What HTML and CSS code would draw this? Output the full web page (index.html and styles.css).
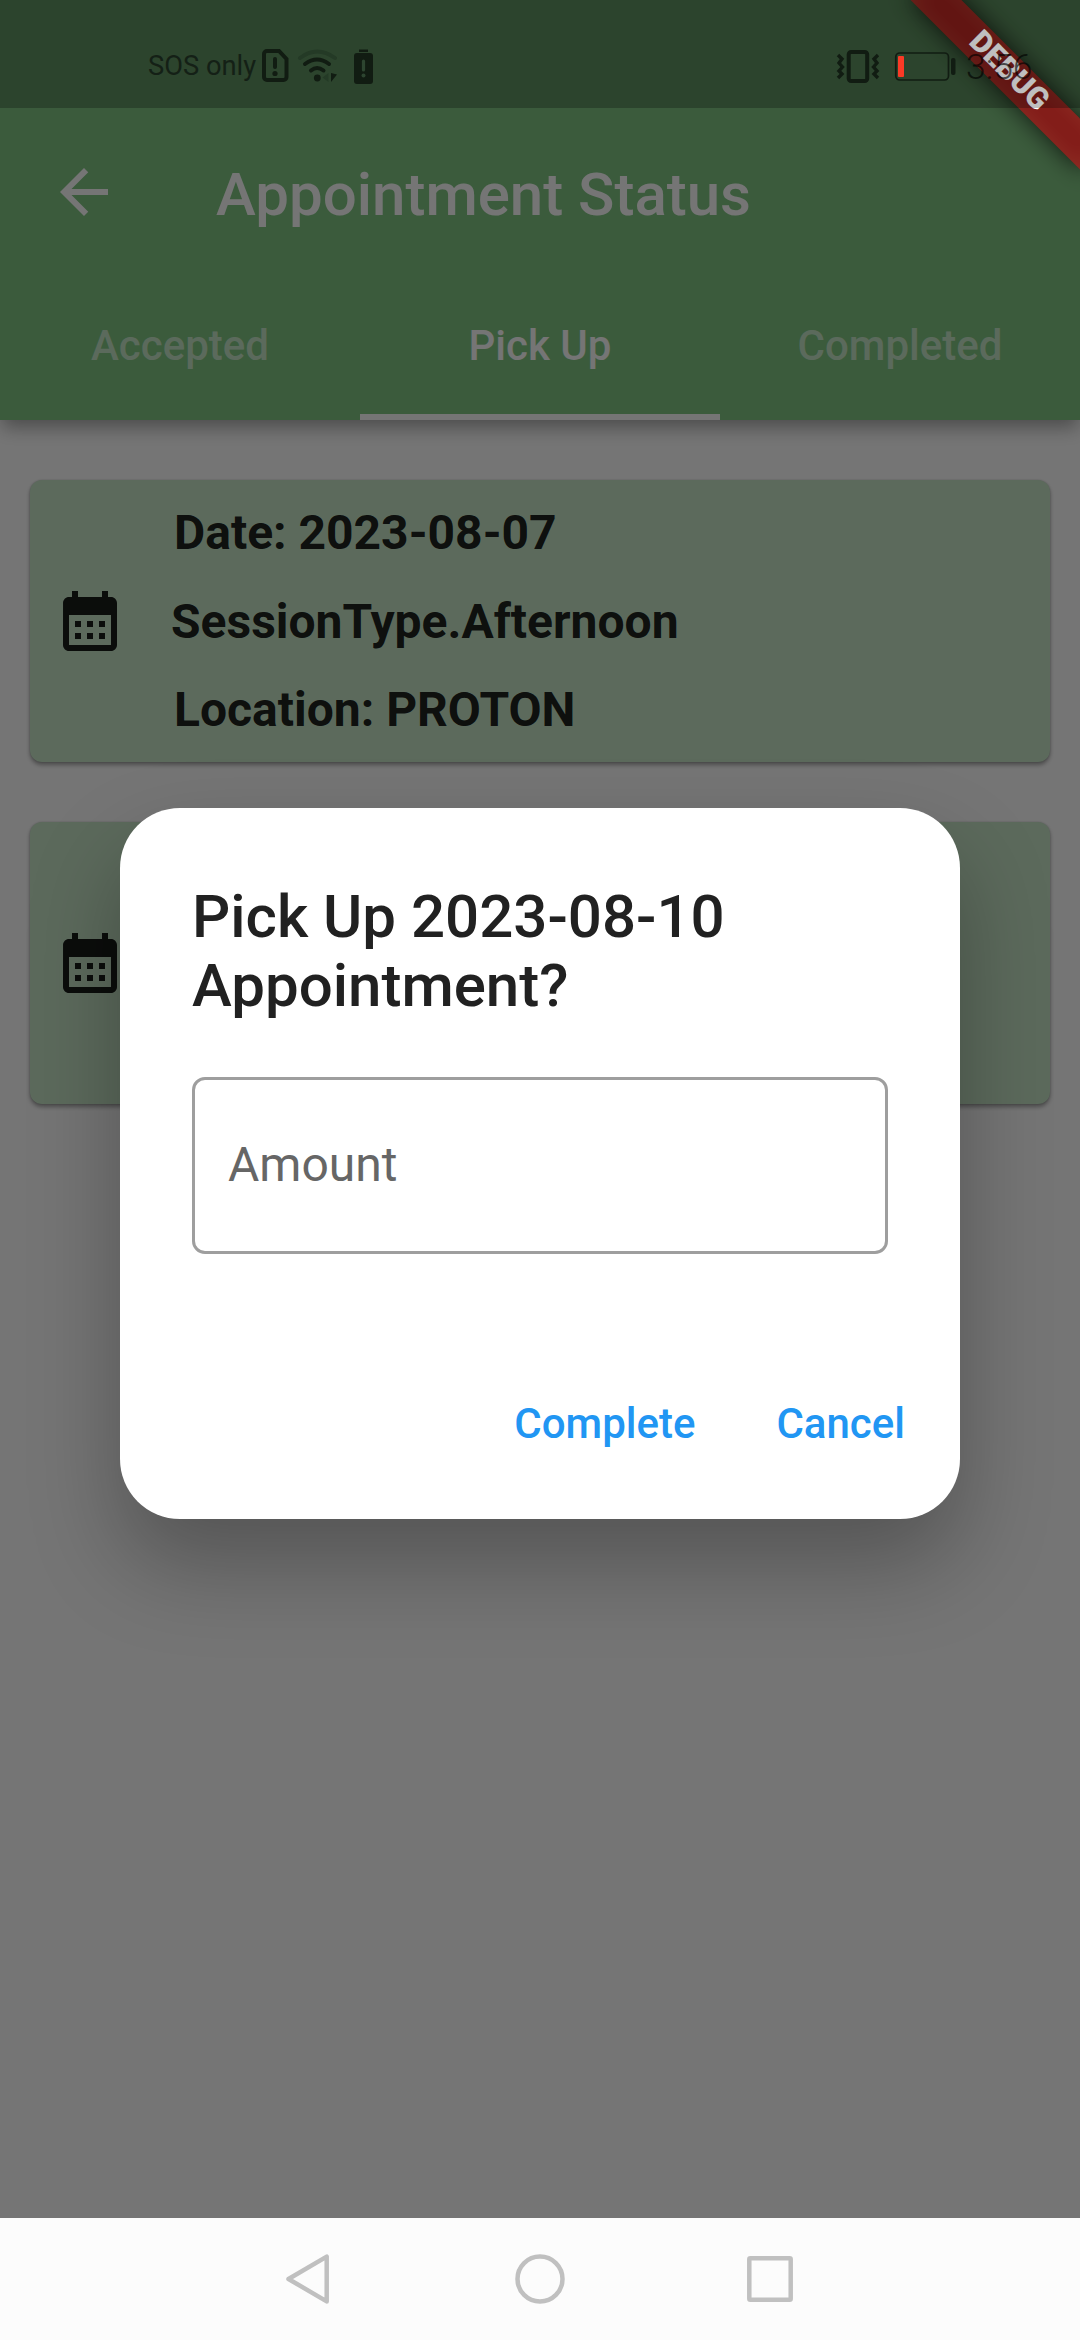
FILE: index.html
```html
<!DOCTYPE html>
<html lang="en">
<head>
<meta charset="utf-8">
<title>Appointment Status</title>
<link rel="stylesheet" href="styles.css">
</head>
<body>
<div class="screen">
  <div class="app">
    <header class="app-bar">
      <div class="toolbar">
        <svg class="back" viewBox="0 0 24 24"><path d="M20 11H7.83l5.59-5.59L12 4l-8 8 8 8 1.41-1.41L7.83 13H20v-2z"/></svg>
        <h1 class="title">Appointment Status</h1>
      </div>
      <nav class="tabs">
        <span class="tab">Accepted</span>
        <span class="tab tab-active">Pick Up</span>
        <span class="tab">Completed</span>
      </nav>
    </header>
    <main class="list">
      <article class="card">
        <svg class="calendar" viewBox="0 0 24 24"><path d="M19 4h-1V2h-2v2H8V2H6v2H5c-1.11 0-1.99.9-1.99 2L3 20c0 1.1.89 2 2 2h14c1.1 0 2-.9 2-2V6c0-1.1-.9-2-2-2zm0 16H5V10h14v10zM9 14H7v-2h2v2zm4 0h-2v-2h2v2zm4 0h-2v-2h2v2zm-8 4H7v-2h2v2zm4 0h-2v-2h2v2zm4 0h-2v-2h2v2z"/></svg>
        <div class="details">
          <p class="indent">Date: 2023-08-07</p>
          <p>SessionType.Afternoon</p>
          <p class="indent">Location: PROTON</p>
        </div>
      </article>
      <article class="card">
        <svg class="calendar" viewBox="0 0 24 24"><path d="M19 4h-1V2h-2v2H8V2H6v2H5c-1.11 0-1.99.9-1.99 2L3 20c0 1.1.89 2 2 2h14c1.1 0 2-.9 2-2V6c0-1.1-.9-2-2-2zm0 16H5V10h14v10zM9 14H7v-2h2v2zm4 0h-2v-2h2v2zm4 0h-2v-2h2v2zm-8 4H7v-2h2v2zm4 0h-2v-2h2v2zm4 0h-2v-2h2v2z"/></svg>
      </article>
    </main>
    <div class="scrim">
      <section class="dialog">
        <h2 class="dialog-title">Pick Up 2023-08-10 Appointment?</h2>
        <div class="field">Amount</div>
        <div class="actions"><span>Complete</span><span>Cancel</span></div>
      </section>
    </div>
    <div class="banner"><span>DEBUG</span></div>
  </div>

  <div class="status-bar">
    <div class="status-left">
      <span class="carrier">SOS only</span>
      <svg width="112" height="40" viewBox="262 46 112 40">
        <path d="M267 51h12l7.500 8v18a3 3 0 0 1-3 3h-16.500a3 3 0 0 1-3-3v-23a3 3 0 0 1 3-3z" fill="none" stroke="#111c12" stroke-width="4"/>
        <path d="M275 59v8" stroke="#111c12" stroke-width="4" stroke-linecap="round"/>
        <circle cx="275" cy="73.500" r="2.600" fill="#111c12"/>
        <g fill="none" stroke-width="4" stroke-linecap="round">
          <path d="M300 58q17-13 35 0" stroke="#243a26"/>
          <path d="M305 64q12-9 24 0" stroke="#111c12"/>
          <path d="M311 70.500q6-5 12.500 0" stroke="#111c12"/>
        </g>
        <circle cx="317.300" cy="78" r="3.400" fill="#111c12"/>
        <path d="M328.500 73v9l-6-4.500z" fill="#243a26"/>
        <path d="M331 73v9l6-7.500z" fill="#111c12"/>
        <path d="M359 49.500h9v2.500h-9z" fill="#111c12"/>
        <rect x="354" y="53" width="19" height="31" rx="3" fill="#111c12"/>
        <path d="M363.500 61v9" stroke="#2d4530" stroke-width="3.200" stroke-linecap="round"/>
        <circle cx="363.500" cy="75.500" r="2" fill="#2d4530"/>
      </svg>
    </div>
    <div class="status-right">
      <svg width="122" height="40" viewBox="836 46 122 40">
        <g fill="none" stroke="#111c12">
          <rect x="848.700" y="52" width="18.500" height="29" rx="2.500" stroke-width="4"/>
          <path d="M838 55l4 4-3 4 3.500 4-3.500 4 3 3-4 4M878 55l-4 4 3 4-3.500 4 3.500 4-3 3 4 4" stroke-width="3.400"/>
          <rect x="895.800" y="53" width="52.700" height="27" rx="4" stroke-width="1.700"/>
        </g>
        <rect x="898" y="56" width="6" height="21" rx="1" fill="#fb3a26"/>
        <rect x="951" y="58" width="4.500" height="17" rx="2" fill="#111c12"/>
      </svg>
      <span class="clock">3:56</span>
    </div>
  </div>

  <footer class="nav-bar">
    <svg class="nav-icon" viewBox="0 0 52 52"><path d="M42.700 3.600v44.800L4.500 26z"/></svg>
    <svg class="nav-icon" viewBox="0 0 52 52"><circle cx="26" cy="26" r="22.500"/></svg>
    <svg class="nav-icon" viewBox="0 0 52 52"><rect x="5.300" y="5.300" width="41.400" height="41.400" rx="1"/></svg>
  </footer>
</div>
</body>
</html>
```

FILE: styles.css
```css
* { box-sizing: border-box; margin: 0; padding: 0; }

body {
  font-family: Roboto, "Noto Sans", sans-serif;
  background: #fff;
}

.screen {
  position: relative;
  display: flex;
  flex-direction: column;
  width: 1080px;
  height: 2340px;
  overflow: hidden;
}

.app {
  position: relative;
  flex: 1;
  overflow: hidden;
  background: #fff;
}

.app-bar {
  position: relative;
  height: 420px;
  padding-top: 108px;
  background: #81c784;
  box-shadow: 0 9px 18px -2px rgba(0, 0, 0, 0.36);
}

.toolbar {
  display: flex;
  align-items: center;
  gap: 96px;
  height: 168px;
  padding-left: 48px;
}

.back { width: 72px; height: 72px; fill: #fff; }

.title {
  padding-top: 6px;
  font-size: 60px;
  font-weight: 500;
  line-height: 70px;
  color: #fff;
}

.tabs {
  display: grid;
  grid-template-columns: repeat(3, 1fr);
  height: 144px;
}

.tab {
  display: flex;
  align-items: center;
  justify-content: center;
  border-bottom: 6px solid transparent;
  font-size: 42px;
  font-weight: 500;
  color: rgba(255, 255, 255, 0.58);
}

.tab-active { color: #fff; border-bottom-color: #fff; }

.list {
  display: flex;
  flex-direction: column;
  gap: 60px;
  padding: 60px 30px;
}

.card {
  display: flex;
  align-items: center;
  gap: 45px;
  height: 282px;
  padding-left: 24px;
  border-radius: 12px;
  background: #c8e6c9;
  box-shadow: 0 3px 4px rgba(0, 0, 0, 0.35), 0 0 2px rgba(0, 0, 0, 0.2);
  color: rgba(0, 0, 0, 0.87);
}

.calendar { width: 72px; height: 72px; fill: currentColor; }

.details {
  padding-top: 2px;
  font-size: 48px;
  font-weight: 700;
  line-height: 88.500px;
}

.indent { padding-left: 3px; }

/* Modal barrier, with the dialog centred in the area below the status bar */
.scrim {
  position: absolute;
  inset: 0;
  display: flex;
  align-items: center;
  justify-content: center;
  padding-top: 108px;
  background: rgba(0, 0, 0, 0.54);
}

.dialog {
  width: 840px;
  height: 711px;
  padding: 74px 72px 0;
  border-radius: 60px;
  background: #fff;
  box-shadow: 0 45px 90px rgba(0, 0, 0, 0.28);
}

.dialog-title {
  font-size: 60px;
  font-weight: 500;
  line-height: 69.500px;
  color: #212121;
}

.field {
  display: flex;
  align-items: center;
  height: 177px;
  margin-top: 56px;
  padding: 0 33px 2px;
  border: 3px solid #9e9e9e;
  border-radius: 13px;
  font-size: 48px;
  color: #666;
}

.actions {
  display: flex;
  justify-content: flex-end;
  gap: 81px;
  margin: 145px -17px 0 0;
  font-size: 42px;
  font-weight: 500;
  line-height: 50px;
  color: #2196f3;
}

/* Diagonal ribbon across the top right corner */
.banner {
  position: absolute;
  top: 54px;
  left: 888px;
  width: 240px;
  height: 36px;
  transform: rotate(45deg);
  font-size: 30.600px;
  font-weight: 900;
  line-height: 36px;
  text-align: center;
  color: #fff;
}

.banner::before,
.banner::after {
  content: "";
  position: absolute;
  inset: 0;
  background: rgba(0, 0, 0, 0.72);
  filter: blur(12px);
}

.banner::after { background: rgba(183, 26, 26, 0.68); filter: none; }

.banner span { position: relative; top: -2px; z-index: 1; }

.status-bar {
  position: absolute;
  top: 0;
  left: 0;
  display: flex;
  justify-content: space-between;
  width: 1080px;
  height: 108px;
  padding: 46px 44px 0 148px;
  background: rgba(0, 0, 0, 0.25);
}

.status-left,
.status-right {
  display: flex;
  height: 40px;
}

.status-left { gap: 6px; }
.status-right { gap: 8px; }

.carrier {
  width: 108px;
  font-size: 27.300px;
  line-height: 41px;
  white-space: nowrap;
  color: #142016;
}

.clock {
  width: 70px;
  font-size: 35.500px;
  font-weight: 300;
  line-height: 43px;
  color: rgba(0, 0, 0, 0.65);
}

.nav-bar {
  display: flex;
  justify-content: center;
  align-items: center;
  gap: 178px;
  height: 122px;
  background: #fcfcfc;
}

.nav-icon {
  width: 52px;
  height: 52px;
  fill: none;
  stroke: #c0c0c0;
  stroke-width: 4.500;
  stroke-linejoin: round;
}
```
